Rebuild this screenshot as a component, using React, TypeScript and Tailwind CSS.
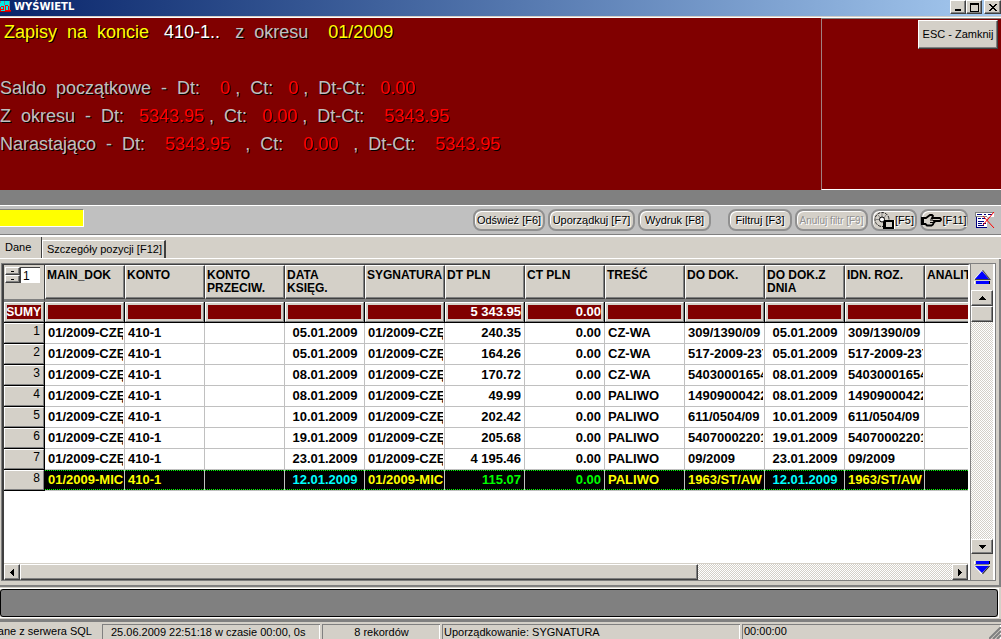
import React from 'react';

type Row = {
  doc: string;
  date: string;
  dt: string;
  text: string;
  ref: string;
};

const COLUMNS = [
  'MAIN_DOK',
  'KONTO',
  'KONTO PRZECIW.',
  'DATA KSIĘG.',
  'SYGNATURA',
  'DT PLN',
  'CT PLN',
  'TREŚĆ',
  'DO DOK.',
  'DO DOK.Z DNIA',
  'IDN. ROZ.',
  'ANALIT',
];

const SUMS = ['', '', '', '', '', '5 343.95', '0.00', '', '', '', '', ''];

const ROWS: Row[] = [
  { doc: '01/2009-CZĘ', date: '05.01.2009', dt: '240.35', text: 'CZ-WA', ref: '309/1390/09' },
  { doc: '01/2009-CZĘ', date: '05.01.2009', dt: '164.26', text: 'CZ-WA', ref: '517-2009-237' },
  { doc: '01/2009-CZĘ', date: '08.01.2009', dt: '170.72', text: 'CZ-WA', ref: '54030001654' },
  { doc: '01/2009-CZĘ', date: '08.01.2009', dt: '49.99', text: 'PALIWO', ref: '14909000422' },
  { doc: '01/2009-CZĘ', date: '10.01.2009', dt: '202.42', text: 'PALIWO', ref: '611/0504/09' },
  { doc: '01/2009-CZĘ', date: '19.01.2009', dt: '205.68', text: 'PALIWO', ref: '54070002201' },
  { doc: '01/2009-CZĘ', date: '23.01.2009', dt: '4 195.46', text: 'PALIWO', ref: '09/2009' },
  { doc: '01/2009-MIC', date: '12.01.2009', dt: '115.07', text: 'PALIWO', ref: '1963/ST/AW' },
];

const raised =
  'border border-t-white border-l-white border-r-[#404040] border-b-[#404040] bg-[#d4d0c8] shadow-[inset_-1px_-1px_0_#808080]';

const track =
  'bg-[conic-gradient(#d4d0c8_25%,#ffffff_0_50%,#d4d0c8_0_75%,#ffffff_0)] bg-[length:2px_2px]';

function Arrow({ dir }: { dir: 'up' | 'down' | 'left' | 'right' }) {
  const d = {
    up: 'M3 0h1v1h1v1h1v1h1v1H0V3h1V2h1V1h1z',
    down: 'M0 0h7v1H6v1H5v1H4v1H3V3H2V2H1V1H0z',
    left: 'M3 0h1v7H3V6H2V5H1V4H0V3h1V2h1V1h1z',
    right: 'M0 0h1v1h1v1h1v1h1v1H3v1H2v1H1v1H0z',
  }[dir];
  const tall = dir === 'left' || dir === 'right';
  return (
    <svg width={tall ? 4 : 7} height={tall ? 7 : 4} shapeRendering="crispEdges">
      <path d={d} fill="#000" />
    </svg>
  );
}

function TitleIcon() {
  return (
    <svg width="12" height="12" viewBox="0 0 12 12" shapeRendering="crispEdges">
      <rect y="1" width="10" height="10" fill="#00e8e8" />
      <path d="M0 1h1v2H0zM4 1h1v4H4zM9 1h1v9H9z" fill="#808080" />
      <path d="M1 6h3v1H1zM0 7h1v4H0zM3 7h1v3H3zM5 5h1v6H5zM6 5h2v1H6zM8 6h1v4H8zM6 10h5v1H6zM1 9h3v1H1z" fill="#ff0000" />
      <path d="M0 11h11v1H0z" fill="#c00000" />
    </svg>
  );
}

function DiscIcon() {
  return (
    <svg className="shrink-0" width="21" height="19" viewBox="0 0 21 19">
      <circle cx="8" cy="8.500" r="7" fill="#d4d0c8" stroke="#202020" strokeDasharray="3 1" />
      <path d="M8 2v4M4 4l2.500 3M2 8.500h4M12 4l-2 3" stroke="#808080" />
      <circle cx="8" cy="8.500" r="2.500" fill="#fff" stroke="#000" />
      <path d="M10 9h10v9H9v-7h1z" fill="#000" />
      <path d="M12 11h6v5h-6z" fill="#d4d0c8" />
      <path d="M20 9h1v9h-1z" fill="#fff" />
    </svg>
  );
}

function HandIcon() {
  return (
    <svg className="shrink-0" width="21" height="14" viewBox="0 0 21 14">
      <path
        d="M2 5h3l4-3h2l1 1-1 2h8l1 1v1l-1 1h-6l.5 1-1 1-.5 1.500-1.500 1H6L4.500 11H2z"
        fill="#d4d0c8"
        stroke="#000"
        strokeWidth="1.800"
      />
      <path d="M9 7h3M9 9.500h3" stroke="#000" />
      <path d="M0 4h3v8H0z" fill="#000" />
    </svg>
  );
}

function FormIcon() {
  return (
    <svg width="20" height="18" viewBox="0 0 20 18">
      <path d="M0 1h19v5h-7v11H1V6H0z" fill="#fff" />
      <path d="M0 1h19v1H0zM0 5h12v1H0zM0 1h1v5H0z" fill="#808080" />
      <path d="M2 3h5v1H2zM9 3h2v1H9zM13 3h4v1h-4z" fill="#000080" />
      <path d="M1 6h1v11H1zM1 16h11v1H1zM3 7h3v1H3zM3 10h6v1H3zM3 12h4v1H3zM3 14h6v1H3zM7 7h3v1H7zM8 12h3v1H8z" fill="#000080" />
      <path d="M19 1L8 14M8 5l11 12" stroke="#ff0000" strokeWidth="1" />
    </svg>
  );
}

function JumpIcon({ down }: { down?: boolean }) {
  return down ? (
    <svg width="17" height="15" viewBox="0 0 17 15">
      <path d="M0 1h1v3H0zM0 6l7 8h2L1 6z" fill="#fff" />
      <path d="M2 1h13v3H2z" fill="#0000ff" />
      <path d="M1 4h14v1H1z" fill="#808080" />
      <path d="M1 6h14L8 13z" fill="#0000ff" />
      <path d="M15 1h1v3h-1zM15 6h1l-7 8H8z" fill="#000" />
    </svg>
  ) : (
    <svg width="17" height="15" viewBox="0 0 17 15">
      <path d="M8 0L0 9h1l8-8zM0 11h1v3H0z" fill="#fff" />
      <path d="M8 1l7 8H1z" fill="#0000ff" />
      <path d="M8 0h1l8 10H1V9h14z" fill="#404040" />
      <path d="M2 11h13v3H2z" fill="#0000ff" />
      <path d="M15 11h1v3h-1z" fill="#000" />
    </svg>
  );
}

function TitleBar() {
  return (
    <div className="flex h-4 items-start bg-gradient-to-r from-[#0a246a] to-[#a6caf0]">
      <TitleIcon />
      <h1 className="ml-0.5 flex-1 font-['DejaVu_Sans',sans-serif] text-[10px] leading-[14px] font-bold text-white">
        WYŚWIETL
      </h1>
      <button aria-label="Minimalizuj" className={`${raised} flex h-3.5 w-4 items-end justify-center pb-0.5`}>
        <span className="h-0.5 w-1.5 bg-black" />
      </button>
      <button aria-label="Maksymalizuj" className={`${raised} flex h-3.5 w-4 items-center justify-center`}>
        <span className="h-[9px] w-[9px] border border-t-2 border-black" />
      </button>
      <button aria-label="Zamknij okno" className={`${raised} ml-0.5 flex h-3.5 w-[17px] items-center justify-center`}>
        <svg width="8" height="7" shapeRendering="crispEdges">
          <path d="M0 0h2v1h1v1h2V1h1V0h2v1H7v1H6v1H5v1h1v1h1v1h1v1H6V6H5V5H3v1H2v1H0V6h1V5h1V4h1V3H2V2H1V1H0z" />
        </svg>
      </button>
    </div>
  );
}

function Red({ children }: { children: React.ReactNode }) {
  return <span className="text-[#ff0000]">{children}</span>;
}

function Summary() {
  return (
    <div className="flex h-[174px] shrink-0 border-t border-[#d4d0c8] bg-[#800000] shadow-[inset_0_1px_0_#ffffff]">
      <div className="flex-1 overflow-hidden pt-px text-lg leading-7 whitespace-pre text-[#c0c0c0] [text-shadow:1px_1px_0_#000]">
        <p className="mb-7 pl-1">
          <span className="text-[#ffff00]">{'Zapisy  na  koncie   '}</span>
          <span className="text-white">410-1..</span>
          {'   z  okresu    '}
          <span className="text-[#ffff00]">01/2009</span>
        </p>
        <p>
          {'Saldo  początkowe  -  Dt:    '}<Red>0</Red>{' ,  Ct:   '}<Red>0</Red>{' ,  Dt-Ct:   '}<Red>0.00</Red>
        </p>
        <p>
          {'Z  okresu  -  Dt:   '}<Red>5343.95</Red>{' ,  Ct:   '}<Red>0.00</Red>{' ,  Dt-Ct:    '}<Red>5343.95</Red>
        </p>
        <p>
          {'Narastająco  -  Dt:    '}<Red>5343.95</Red>{'   ,  Ct:    '}<Red>0.00</Red>{'   ,  Dt-Ct:    '}<Red>5343.95</Red>
        </p>
      </div>
      <div className="mt-px flex w-[180px] items-start justify-end border-t border-b border-l border-t-[#808080] border-b-white border-l-[#a08080] pt-px pr-[3px]">
        <button className={`${raised} h-[29px] w-20 text-[11px] whitespace-nowrap`}>ESC - Zamknij</button>
      </div>
    </div>
  );
}

function ToolButton({ className, children, disabled }: { className: string; children: React.ReactNode; disabled?: boolean }) {
  return (
    <button
      disabled={disabled}
      className={`flex items-center justify-center rounded-lg border-2 border-[#909090] bg-[#d4d0c8] whitespace-nowrap shadow-[inset_1px_1px_0_#ffffff] [text-shadow:1px_1px_0_#fff] ${className}`}
    >
      {children}
    </button>
  );
}

function Toolbar() {
  return (
    <div className="flex h-[30px] shrink-0 items-start gap-[3px] border-t border-b border-t-white border-b-[#808080] bg-[#c0c0c0] pt-[3px] text-[11px]">
      <input
        aria-label="Szukaj"
        className="h-[18px] w-[84px] border-t border-r border-b border-t-[#808080] border-r-white border-b-white bg-[#ffff00] px-1 outline-none"
      />
      <div className="flex-1" />
      <ToolButton className="h-[22px] w-[72px]">Odśwież [F6]</ToolButton>
      <ToolButton className="h-[22px] w-[87px]">Uporządkuj [F7]</ToolButton>
      <ToolButton className="mr-3.5 h-[22px] w-[73px]">Wydruk [F8]</ToolButton>
      <ToolButton className="h-[22px] w-16">Filtruj [F3]</ToolButton>
      <ToolButton className="h-[22px] w-[73px] text-[10px] text-[#909090]" disabled>Anuluj filtr [F9]</ToolButton>
      <ToolButton className="h-[22px] w-[46px]"><DiscIcon />[F5]</ToolButton>
      <ToolButton className="h-[22px] w-12"><HandIcon />[F11]</ToolButton>
      <button aria-label="Usuń układ" className="mt-0.5 mr-1.5 ml-1"><FormIcon /></button>
    </div>
  );
}

function Tabs() {
  return (
    <div role="tablist" className="flex h-[22px] shrink-0 items-end border-b border-white text-[11px]">
      <button role="tab" aria-selected="true" className="h-[21px] w-[42px] border-r border-[#404040] pl-[5px] text-left">
        Dane
      </button>
      <button role="tab" aria-selected="false" className="h-[18px] border-t border-r-2 border-l border-t-white border-r-[#404040] border-l-white pr-0.5 pl-1">
        Szczegóły pozycji [F12]
      </button>
    </div>
  );
}

function DataRow({ row, index, active }: { row: Row; index: number; active: boolean }) {
  const cells = [row.doc, '410-1', '', row.date, row.doc, row.dt, '0.00', row.text, row.ref, row.date, row.ref, ''];
  return (
    <tr className={active ? 'bg-black' : 'bg-white'}>
      <th className="h-[21px] border-r border-b border-black p-0 font-normal">
        <div className="h-5 border border-t-white border-r-[#808080] border-b-[#808080] border-l-white bg-[#d4d0c8] pr-[3px] text-right text-xs leading-[15px]">
          {index + 1}
        </div>
      </th>
      {cells.map((cell, i) => {
        const isDate = i === 3 || i === 9;
        const isNum = i === 5 || i === 6;
        const align = isDate ? 'pl-1 pr-[3px] text-center' : isNum ? 'pr-[3px] text-right' : 'pl-[3px] pr-px';
        const color = !active ? 'text-black' : isDate ? 'text-[#00ffff]' : isNum ? 'text-[#00ff00]' : 'text-[#ffff00]';
        return (
          <td key={i} className="h-[21px] border-r border-b border-[#c0c0c0] p-0">
            <div className={`h-5 ${active ? 'border-y border-dotted border-[#00ff00] leading-[18px]' : 'leading-5'} ${align} ${color}`}>
              <div className="overflow-hidden whitespace-nowrap">{cell}</div>
            </div>
          </td>
        );
      })}
    </tr>
  );
}

function Grid() {
  return (
    <div className="min-h-0 flex-1 overflow-hidden bg-white">
      <table className="w-[1001px] table-fixed border-separate border-spacing-0 text-[13px] font-bold">
        <colgroup>
          <col className="w-[41px]" />
          {COLUMNS.map((c) => (
            <col key={c} className="w-20" />
          ))}
        </colgroup>
        <thead>
          <tr className="bg-[#d4d0c8] text-xs leading-[13px]">
            <th className="h-[37px] border-r border-b-[3px] border-r-[#404040] border-b-[#808080] p-0 align-top">
              <div className="flex h-[18px] pt-0.5 pl-px">
                <div className="flex w-[15px] flex-col">
                  <button aria-label="Więcej" className={`${raised} flex h-2 items-center justify-center`}>
                    <span className="h-px w-[3px] bg-black" />
                  </button>
                  <button aria-label="Mniej" className={`${raised} flex h-2 items-center justify-center`}>
                    <span className="h-px w-[3px] bg-black" />
                  </button>
                </div>
                <input
                  aria-label="Wiersz"
                  defaultValue="1"
                  className="h-4 w-5 border-t border-l border-[#404040] bg-white pl-0.5 text-xs font-normal outline-none"
                />
              </div>
            </th>
            {COLUMNS.map((c) => (
              <th key={c} className="h-[37px] border-b-[3px] border-[#808080] p-0 align-top">
                <div className="h-[34px] overflow-hidden border border-t-white border-r-[#404040] border-b-[#404040] border-l-white pt-[3px] pr-1 pl-px text-left shadow-[inset_-1px_-1px_0_#808080]">
                  {c}
                </div>
              </th>
            ))}
          </tr>
        </thead>
        <tbody>
          <tr className="bg-[#d4d0c8] text-xs leading-[14px] text-white">
            <th className="h-[21px] border-r border-b border-black p-0">
              <div className="h-5 border border-t-white border-r-[#808080] border-b-[#808080] border-l-white p-0.5">
                <div className="flex h-3.5 justify-end bg-[#800000]">SUMY</div>
              </div>
            </th>
            {SUMS.map((s, i) => (
              <td key={i} className="h-[21px] border-r border-b border-black p-0">
                <div className="h-5 border border-t-white border-r-[#808080] border-b-[#808080] border-l-white p-0.5">
                  <div className="h-3.5 bg-[#800000] text-right text-[13px]">{s}</div>
                </div>
              </td>
            ))}
          </tr>
          {ROWS.map((row, i) => (
            <DataRow key={i} row={row} index={i} active={i === 7} />
          ))}
        </tbody>
      </table>
    </div>
  );
}

function GridPanel() {
  return (
    <div className="flex flex-1 flex-col border-r-2 border-b-2 border-[#808080] pt-1 pr-[3px] pb-1 pl-px">
      <div className="flex flex-1 border border-[#808080]">
        <div className="flex min-w-0 flex-1 flex-col border-t border-r-2 border-l-2 border-t-[#404040] border-r-white border-l-[#404040]">
          <Grid />
          <div className="flex h-[17px] shrink-0 border-t border-[#d4d0c8]">
            <button aria-label="W lewo" className={`${raised} flex w-4 items-center justify-center`}><Arrow dir="left" /></button>
            <div className={`flex flex-1 ${track}`}>
              <div className={`${raised} w-8/11`} />
            </div>
            <button aria-label="W prawo" className={`${raised} flex w-4 items-center justify-center`}><Arrow dir="right" /></button>
          </div>
        </div>
        <div className={`flex w-[25px] shrink-0 flex-col border-r-2 border-l border-r-white border-l-[#808080] ${track}`}>
          <button aria-label="Początek" className="flex h-[26px] items-center justify-center bg-[#d4d0c8]"><JumpIcon /></button>
          <button aria-label="W górę" className={`${raised} flex h-4 items-center justify-center`}><Arrow dir="up" /></button>
          <div className={`${raised} h-4`} />
          <div className="flex-1" />
          <button aria-label="W dół" className={`${raised} flex h-[15px] items-center justify-center`}><Arrow dir="down" /></button>
          <button aria-label="Koniec" className="flex h-[26px] items-center justify-center bg-[#d4d0c8]"><JumpIcon down /></button>
        </div>
      </div>
    </div>
  );
}

function StatusBar() {
  const cell = 'border-t border-l border-[#808080] shadow-[inset_-1px_0_0_#ffffff] whitespace-nowrap';
  return (
    <footer className="flex h-[17px] shrink-0 gap-0.5 pt-0.5 text-[11px] leading-[15px]">
      <div className="flex w-[100px] justify-end pr-2 whitespace-nowrap">Dane z serwera SQL</div>
      <div className={`${cell} w-[218px] pl-2`}>25.06.2009 22:51:18 w czasie 00:00, 0s</div>
      <div className={`${cell} w-[118px] text-center`}>8 rekordów</div>
      <div className={`${cell} w-[298px] pl-px`}>Uporządkowanie: SYGNATURA</div>
      <div className={`${cell} flex flex-1 items-end justify-between pl-px`}>
        <span>00:00:00</span>
        <svg width="12" height="12" className="shrink-0">
          <path d="M0 12L12 0M4 12l8-8M8 12l4-4" stroke="#808080" strokeWidth="2" />
        </svg>
      </div>
    </footer>
  );
}

export default function App() {
  return (
    <div className="flex min-h-screen flex-col overflow-hidden bg-[#d4d0c8] font-['Liberation_Sans',Arial,sans-serif] text-black">
      <TitleBar />
      <Summary />
      <div className="h-[15px] shrink-0 bg-[#808080]" />
      <Toolbar />
      <div className="h-0.5 shrink-0 bg-white" />
      <Tabs />
      <GridPanel />
      {/* message strip */}
      <div className="shrink-0 border-b-[3px] border-[#808080] pt-px pr-0.5 pb-px">
        <div className="border-t border-r border-b border-white">
          <div className="h-7 rounded-[3px] border border-black bg-[#808080]" />
        </div>
      </div>
      <StatusBar />
    </div>
  );
}
